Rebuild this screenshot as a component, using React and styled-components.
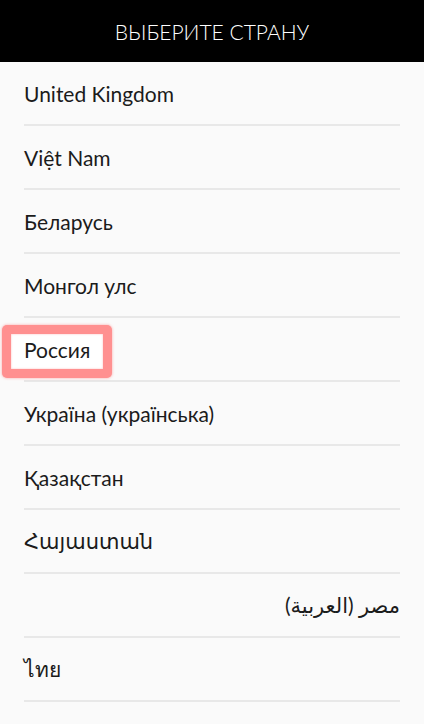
import React from "react";
import styled, { createGlobalStyle } from "styled-components";

const Global = createGlobalStyle`
  html, body { margin: 0; padding: 0; background: #fafafa; }
  body { font-family: "Lato", "DejaVu Sans", sans-serif; overflow: hidden; }
`;

const Screen = styled.div`
  width: 424px;
  height: 724px;
  overflow: hidden;
  background: #fafafa;
  display: flex;
  flex-direction: column;
`;

const Header = styled.header`
  height: 62px;
  flex: none;
  background: #000;
  color: #fff;
  display: flex;
  align-items: center;
  justify-content: center;
  font-size: 21px;
  font-weight: 300;
  letter-spacing: 0px;
`;

const List = styled.ul`
  list-style: none;
  margin: 0;
  padding: 0 24px;
`;

const Row = styled.li`
  height: 62px;
  border-bottom: 2px solid #e8e8e8;
  display: flex;
  align-items: center;
  justify-content: ${(p) => (p.$rtl ? "flex-end" : "flex-start")};
  font-size: 21px;
  color: #1b1b1b;
`;

const Label = styled.span`
  position: relative;
  z-index: 0;
  direction: ${(p) => (p.$rtl ? "rtl" : "ltr")};
  ${(p) =>
    p.$highlight &&
    `
    &::before {
      content: "";
      position: absolute;
      z-index: -1;
      left: -22px;
      right: -22px;
      top: -12px;
      bottom: -16px;
      background: #ffffff;
      border: 9px solid rgba(255, 125, 125, 0.85);
      border-radius: 5px;
      box-shadow: 0 0 3px rgba(255, 110, 110, 0.6), inset 0 0 2px rgba(255, 110, 110, 0.5);
    }
  `}
`;

const countries = [
  { name: "United Kingdom" },
  { name: "Việt Nam" },
  { name: "Беларусь" },
  { name: "Монгол улс" },
  { name: "Россия", highlight: true },
  { name: "Україна (українська)" },
  { name: "Қазақстан" },
  { name: "Հայաստան" },
  { name: "مصر (العربية)", rtl: true },
  { name: "ไทย" },
  { name: "Oʻzbekiston (oʻzbekcha)" },
];

export default function App() {
  return (
    <>
      <Global />
      <Screen>
        <Header>ВЫБЕРИТЕ СТРАНУ</Header>
        <List>
          {countries.map((c) => (
            <Row key={c.name} $rtl={c.rtl}>
              <Label $highlight={c.highlight} $rtl={c.rtl}>
                {c.name}
              </Label>
            </Row>
          ))}
        </List>
      </Screen>
    </>
  );
}
